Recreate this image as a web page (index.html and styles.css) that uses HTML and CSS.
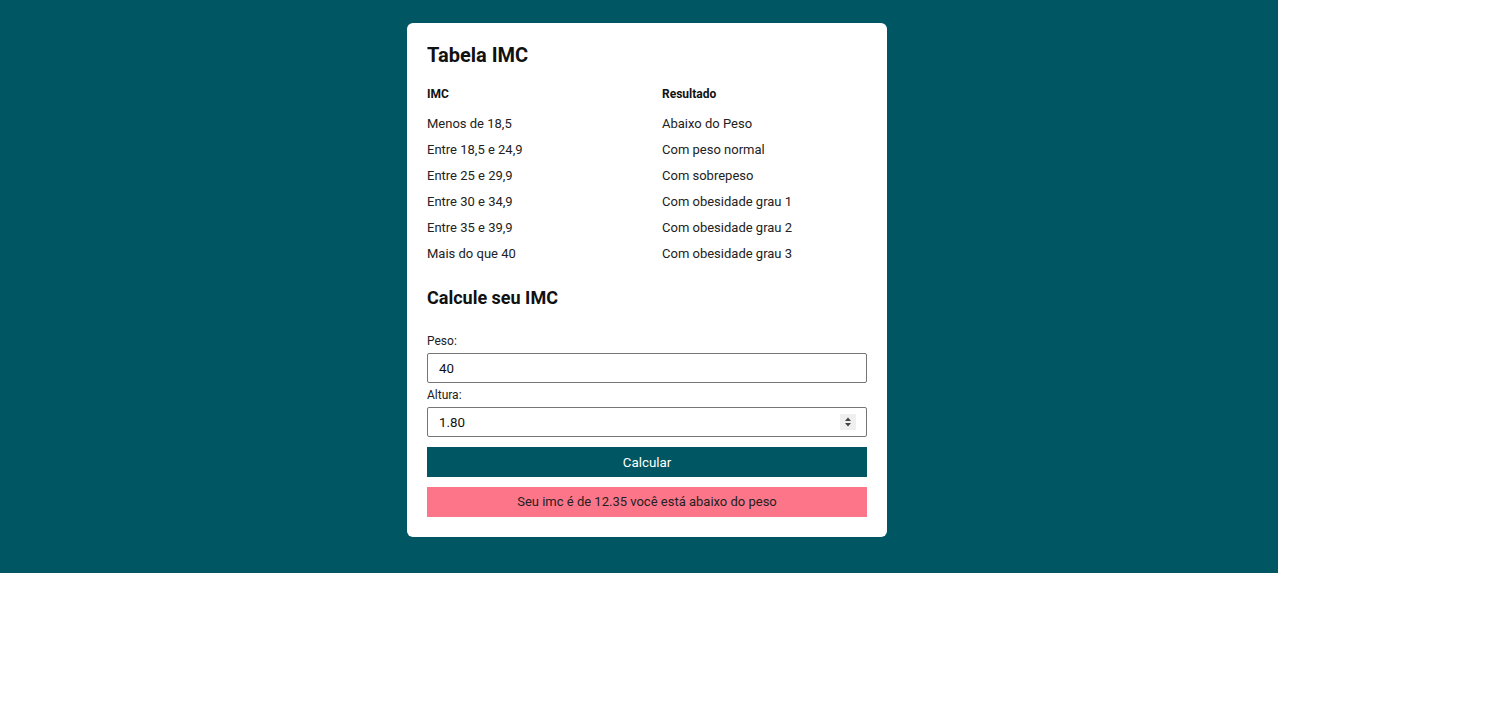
FILE: index.html
```html
<!DOCTYPE html>
<html lang="pt-BR">
<head>
<meta charset="utf-8">
<title>Tabela IMC</title>
<link rel="stylesheet" href="styles.css">
</head>
<body>
<main class="page">
  <section class="card">
    <h2 class="title">Tabela IMC</h2>
    <div class="table">
      <div class="th">IMC</div>
      <div class="th">Resultado</div>
      <div class="td">Menos de 18,5</div><div class="td">Abaixo do Peso</div>
      <div class="td">Entre 18,5 e 24,9</div><div class="td">Com peso normal</div>
      <div class="td">Entre 25 e 29,9</div><div class="td">Com sobrepeso</div>
      <div class="td">Entre 30 e 34,9</div><div class="td">Com obesidade grau 1</div>
      <div class="td">Entre 35 e 39,9</div><div class="td">Com obesidade grau 2</div>
      <div class="td">Mais do que 40</div><div class="td">Com obesidade grau 3</div>
    </div>
    <h3 class="subtitle">Calcule seu IMC</h3>
    <form class="form">
      <label class="label" for="peso">Peso:</label>
      <input class="input" id="peso" type="number" value="40">
      <label class="label label-b" for="altura">Altura:</label>
      <div class="field">
        <input class="input" id="altura" type="number" step="0.01" value="1.80">
        <span class="spin" aria-hidden="true">
          <svg width="16" height="16" viewBox="0 0 16 16"><path d="M5 7 L8 3.5 L11 7 Z M5 9 L8 12.5 L11 9 Z" fill="#444"/></svg>
        </span>
      </div>
      <button class="btn" type="button">Calcular</button>
      <div class="result">Seu imc é de 12.35 você está abaixo do peso</div>
    </form>
  </section>
</main>
</body>
</html>
```

FILE: styles.css
```css
* { box-sizing: border-box; }
html, body { margin: 0; padding: 0; background: #fff; }
body { font-family: Roboto, "Liberation Sans", sans-serif; color: #1f1f1f; }

.page {
  width: 1278px;
  background: #005662;
  padding: 23px 0 36px 407px;
}

.card {
  width: 480px;
  background: #fff;
  border-radius: 6px;
  padding: 20px;
}

.title {
  margin: 0 0 14px;
  font-size: 20px;
  line-height: 24px;
  font-weight: 700;
  color: #111;
}

.table {
  display: grid;
  grid-template-columns: 235px 1fr;
  grid-template-rows: 30px;
  grid-auto-rows: 26px;
}
.th {
  font-size: 12px;
  font-weight: 700;
  line-height: 26px;
  height: 26px;
  color: #111;
}
.td {
  font-size: 13px;
  line-height: 26px;
  color: #222;
}

.subtitle {
  margin: 20px 0 0;
  font-size: 18px;
  line-height: 22px;
  font-weight: 700;
  color: #111;
}

.form {
  display: flex;
  flex-direction: column;
  margin-top: 25px;
}

.label {
  font-size: 12px;
  line-height: 14px;
  color: #222;
  margin-bottom: 5px;
}
.label-b { margin-top: 5px; }

.field { position: relative; }

.input {
  display: block;
  height: 30px;
  width: 100%;
  border: 1px solid #767676;
  border-radius: 2px;
  padding: 0 11px;
  font-family: Roboto, "Liberation Sans", sans-serif;
  font-size: 13.333px;
  color: #111;
  background: #fff;
}
.input::-webkit-inner-spin-button,
.input::-webkit-outer-spin-button {
  -webkit-appearance: none;
  margin: 0;
}

.spin {
  position: absolute;
  right: 11px;
  top: 7px;
  width: 16px;
  height: 16px;
  background: #efefef;
  display: flex;
}

.btn {
  margin-top: 10px;
  height: 30px;
  border: 0;
  background: #005662;
  color: #fff;
  font-family: Roboto, "Liberation Sans", sans-serif;
  font-size: 13.333px;
  cursor: pointer;
}

.result {
  margin-top: 10px;
  height: 30px;
  background: #fd7589;
  color: #222;
  font-size: 13px;
  line-height: 30px;
  text-align: center;
}
```
